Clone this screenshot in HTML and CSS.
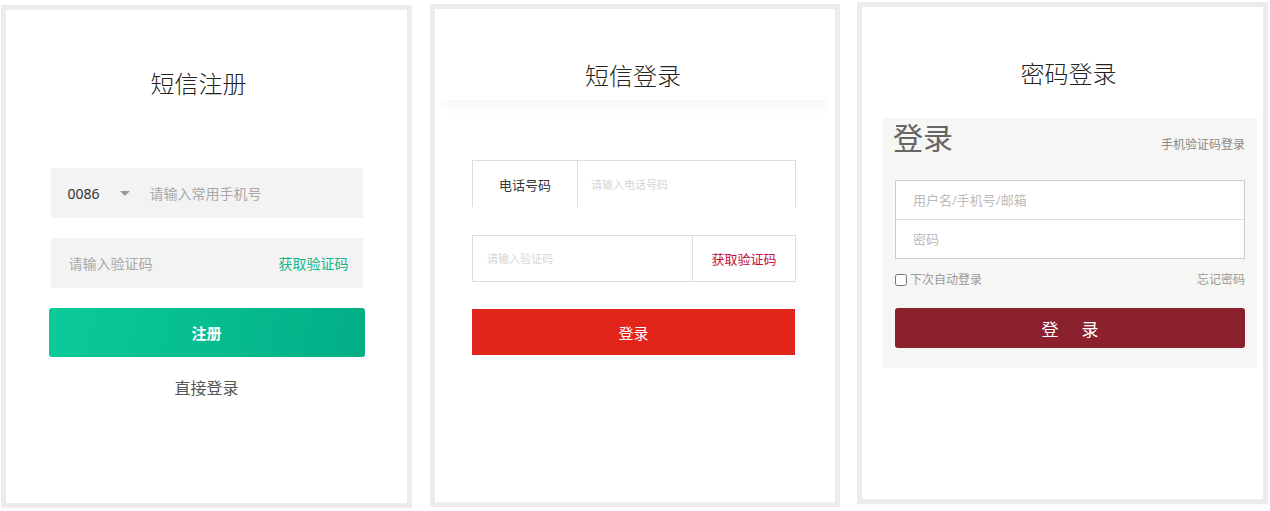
FILE: index.html
```html
<!DOCTYPE html>
<html lang="zh-CN">
<head>
  <meta charset="UTF-8">
  <meta name="viewport" content="width=device-width, initial-scale=1.0">
  <title>登录注册</title>
  <link rel="stylesheet" href="styles.css">
</head>
<body>

  <div class="page">

    <!-- 短信注册 -->
    <section class="card card-reg">
      <h2 class="card-title">短信注册</h2>
      <div class="reg-form">
        <div class="reg-field">
          <span class="area-code">0086</span>
          <span class="caret"></span>
          <input class="reg-input" type="text" placeholder="请输入常用手机号">
        </div>
        <div class="reg-field reg-field-code">
          <input class="reg-input" type="text" placeholder="请输入验证码">
          <a class="reg-code" href="#">获取验证码</a>
        </div>
        <button class="reg-btn" type="button">注册</button>
        <a class="reg-link" href="#">直接登录</a>
      </div>
    </section>

    <!-- 短信登录 -->
    <section class="card card-sms">
      <h2 class="card-title">短信登录</h2>
      <div class="sms-shade"></div>
      <div class="sms-row sms-row-open">
        <span class="sms-label">电话号码</span>
        <input class="sms-input" type="text" placeholder="请输入电话号码">
      </div>
      <div class="sms-row">
        <input class="sms-input sms-input-code" type="text" placeholder="请输入验证码">
        <a class="sms-code" href="#">获取验证码</a>
      </div>
      <button class="sms-btn" type="button">登录</button>
    </section>

    <!-- 密码登录 -->
    <section class="card card-pwd">
      <h2 class="card-title">密码登录</h2>
      <div class="pwd-panel">
        <div class="pwd-head">
          <span class="pwd-heading">登录</span>
          <a class="pwd-switch" href="#">手机验证码登录</a>
        </div>
        <div class="pwd-fields">
          <input class="pwd-input" type="text" placeholder="用户名/手机号/邮箱">
          <input class="pwd-input" type="password" placeholder="密码">
        </div>
        <div class="pwd-opts">
          <label class="pwd-remember"><input type="checkbox"> 下次自动登录</label>
          <a class="pwd-forget" href="#">忘记密码</a>
        </div>
        <button class="pwd-btn" type="button"><span>登</span><span>录</span></button>
      </div>
    </section>

  </div>

</body>
</html>
```

FILE: styles.css
```css
/* dasar halaman */
body {
  margin: 0;
  background: #ffffff;
  font-family: "Noto Sans", "Noto Sans CJK SC", sans-serif;
  color: #333333;
}

a {
  text-decoration: none;
}

input, button {
  font-family: inherit;
  outline: none;
}

/* tiga kartu berjajar */
.page {
  display: flex;
  align-items: flex-start;
  padding-left: 1px;
}

.card {
  box-sizing: border-box;
  border: 5px solid #ececec;
  background: #ffffff;
}

.card-title {
  margin: 0;
  font-size: 24px;
  line-height: 32px;
  font-weight: 300;
  color: #222222;
  text-align: center;
}

/* ===== kartu 1: 短信注册 ===== */
.card-reg {
  width: 411px;
  height: 503px;
  margin-top: 5px;
  padding-top: 58px;
}

.card-reg .card-title {
  padding-right: 16px;
}

.reg-form {
  display: flex;
  flex-direction: column;
  align-items: center;
  margin-top: 68px;
}

.reg-field {
  box-sizing: border-box;
  width: 312px;
  height: 50px;
  display: flex;
  align-items: center;
  padding: 0 14px 0 17px;
  background: #f3f3f3;
}

.reg-field + .reg-field {
  margin-top: 20px;
}

.reg-field-code {
  padding-left: 18px;
}

.area-code {
  font-size: 14px;
  color: #333333;
}

.caret {
  width: 0;
  height: 0;
  margin: 1px 20px 0 20px;
  border-left: 5px solid transparent;
  border-right: 5px solid transparent;
  border-top: 5px solid #999999;
}

.reg-input {
  flex: 1;
  min-width: 0;
  padding: 0;
  border: none;
  background: transparent;
  font-size: 14px;
  color: #333333;
}

.reg-input::placeholder {
  color: #a8a8a8;
}

.reg-code {
  font-size: 14px;
  color: #14b68a;
}

.reg-btn {
  width: 316px;
  height: 49px;
  margin-top: 20px;
  border: none;
  border-radius: 3px;
  background: linear-gradient(100deg, #0bca9a 0%, #06bd90 50%, #02ad85 100%);
  color: #ffffff;
  font-size: 15px;
  font-weight: bold;
  cursor: pointer;
}

.reg-link {
  margin-top: 19px;
  font-size: 16px;
  line-height: 24px;
  color: #555555;
}

/* ===== kartu 2: 短信登录 ===== */
.card-sms {
  width: 410px;
  height: 503px;
  margin-top: 4px;
  margin-left: 18px;
  padding-top: 51px;
}

.card-sms .card-title {
  padding-right: 4px;
}

.sms-shade {
  height: 15px;
  margin: 8px 9px 0 6px;
  background: linear-gradient(#f8f8f8, #fdfdfd 60%, #ffffff);
}

.sms-row {
  box-sizing: border-box;
  width: 324px;
  height: 47px;
  margin: 28px 0 0 37px;
  display: flex;
  border: 1px solid #dddddd;
}

.sms-row-open {
  margin-top: 45px;
  border-bottom: none;
}

.sms-label {
  width: 104px;
  border-right: 1px solid #dddddd;
  display: flex;
  align-items: center;
  justify-content: center;
  font-size: 13px;
  color: #333333;
}

.sms-input {
  flex: 1;
  min-width: 0;
  padding: 0 0 0 13px;
  border: none;
  background: transparent;
  font-size: 11px;
  color: #333333;
}

.sms-input-code {
  padding-left: 14px;
}

.sms-input::placeholder {
  color: #d6d6d6;
}

.sms-code {
  width: 102px;
  border-left: 1px solid #dddddd;
  display: flex;
  align-items: center;
  justify-content: center;
  font-size: 13px;
  color: #c81038;
}

.sms-btn {
  display: block;
  width: 323px;
  height: 46px;
  margin: 27px 0 0 37px;
  border: none;
  background: #e1251b;
  color: #ffffff;
  font-size: 15px;
  cursor: pointer;
}

/* ===== kartu 3: 密码登录 ===== */
.card-pwd {
  width: 411px;
  height: 502px;
  margin-top: 2px;
  margin-left: 17px;
  padding-top: 51px;
}

.card-pwd .card-title {
  padding-left: 12px;
}

.pwd-panel {
  box-sizing: border-box;
  width: 374px;
  margin: 28px 0 0 21px;
  padding: 2px 12px 20px 12px;
  background: #f6f6f4;
}

.pwd-head {
  display: flex;
  justify-content: space-between;
  align-items: baseline;
}

.pwd-heading {
  font-size: 30px;
  line-height: 36px;
  color: #666666;
  margin-left: -2px;
}

.pwd-switch {
  font-size: 12px;
  color: #888888;
}

.pwd-fields {
  margin-top: 24px;
  border: 1px solid #cccccc;
  background: #ffffff;
}

.pwd-input {
  display: block;
  box-sizing: border-box;
  width: 100%;
  height: 38px;
  padding: 0 0 0 17px;
  border: none;
  background: transparent;
  font-size: 13px;
  color: #333333;
}

.pwd-input:first-child {
  height: 39px;
  border-bottom: 1px solid #dddddd;
}

.pwd-input::placeholder {
  color: #bbbbbb;
}

.pwd-opts {
  margin-top: 12px;
  display: flex;
  justify-content: space-between;
  align-items: center;
  height: 16px;
  font-size: 12px;
  color: #999999;
}

.pwd-remember {
  display: flex;
  align-items: center;
}

.pwd-remember input {
  width: 12px;
  height: 12px;
  margin: 1px 3px 0 0;
}

.pwd-forget {
  color: #999999;
}

.pwd-btn {
  width: 100%;
  height: 40px;
  margin-top: 21px;
  display: flex;
  justify-content: center;
  align-items: center;
  gap: 23px;
  border: none;
  border-radius: 3px;
  background: #8b212d;
  color: #ffffff;
  font-size: 17px;
  cursor: pointer;
}
```
